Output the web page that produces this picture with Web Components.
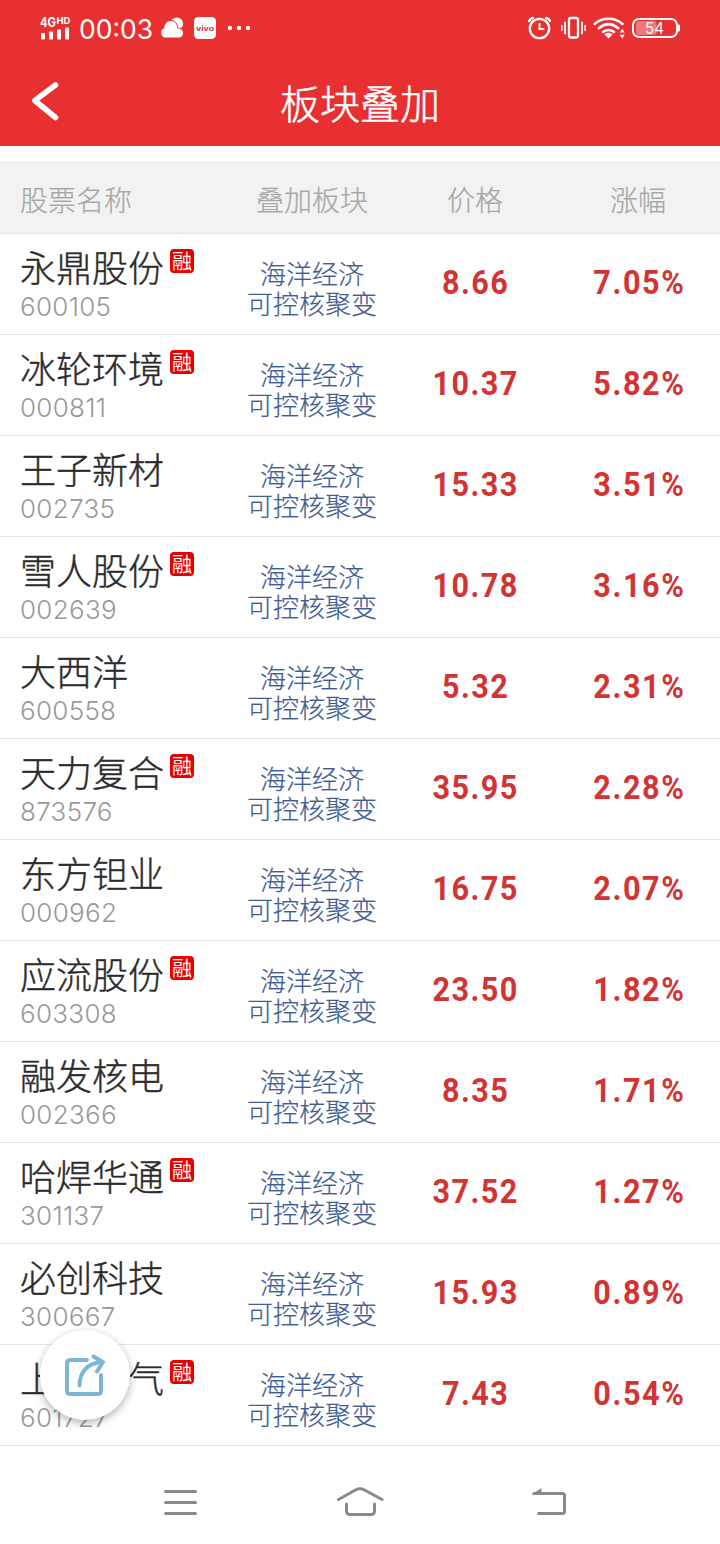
<!DOCTYPE html>
<html lang="zh-CN">
<head>
<meta charset="utf-8">
<title>板块叠加</title>
<style>
  html, body {
    margin: 0;
    background: #fff;
  }
  body {
    width: 720px;
    height: 1544px;
    overflow: hidden;
    font-family: Inter, "Noto Sans CJK SC", sans-serif;
  }
</style>
</head>
<body>
<overlay-app></overlay-app>

<script>
const CJK = '"Noto Sans CJK SC", sans-serif';

const STOCKS = [
  ["永鼎股份", "600105", "8.66", "7.05%", true],
  ["冰轮环境", "000811", "10.37", "5.82%", true],
  ["王子新材", "002735", "15.33", "3.51%", false],
  ["雪人股份", "002639", "10.78", "3.16%", true],
  ["大西洋", "600558", "5.32", "2.31%", false],
  ["天力复合", "873576", "35.95", "2.28%", true],
  ["东方钽业", "000962", "16.75", "2.07%", false],
  ["应流股份", "603308", "23.50", "1.82%", true],
  ["融发核电", "002366", "8.35", "1.71%", false],
  ["哈焊华通", "301137", "37.52", "1.27%", true],
  ["必创科技", "300667", "15.93", "0.89%", false],
  ["上海电气", "601727", "7.43", "0.54%", true],
];

class StatusBar extends HTMLElement {
  constructor() {
    super();
    this.attachShadow({ mode: "open" });
    this.shadowRoot.innerHTML = `
      <style>
        :host {
          display: flex;
          justify-content: space-between;
          height: 56px;
          box-sizing: border-box;
          padding: 0 40px;
          color: #fff;
        }
        .side { display: flex; align-items: center; }
        svg { display: block; flex: none; }
        .signal { padding-bottom: 3px; }
        .time {
          width: 82px;
          font: 400 26.5px/32px Inter, sans-serif;
          padding-top: 2px;
          white-space: nowrap;
        }
        .cloud { margin-right: 10px; }
        .vivo { margin-right: 11px; }
      </style>
      <div class="side">
        <svg class="signal" width="39" height="32" viewBox="0 -6 39 32" fill="#fff">
          <g font-family="Inter, sans-serif" font-weight="700">
            <text x="0" y="10" font-size="13" textLength="16" lengthAdjust="spacingAndGlyphs">4G</text>
            <text x="16.500" y="7" font-size="9.500" textLength="14" lengthAdjust="spacingAndGlyphs">HD</text>
          </g>
          <rect x="1" y="16" width="4" height="6.500" rx="1"/>
          <rect x="9" y="14.500" width="4" height="8" rx="1"/>
          <rect x="17" y="12.500" width="4" height="10" rx="1"/>
          <rect x="25" y="10.500" width="4" height="12" rx="1"/>
        </svg>
        <span class="time">00:03</span>
        <svg class="cloud" width="23" height="22" viewBox="0 0 23 22">
          <circle cx="15.800" cy="6.800" r="6.300" fill="#fff"/>
          <path d="M5 20.500C-1.500 20.500-1 11.600 3.300 11.600 3.300 1.500 16 1.500 16.500 11.500 24 11 23.500 20.500 17.500 20.500Z" fill="#fff" stroke="#e83030" stroke-width="2" paint-order="stroke"/>
        </svg>
        <svg class="vivo" width="22" height="22" viewBox="0 0 22 22">
          <rect width="22" height="22" rx="4.500" fill="#fff"/>
          <text x="2" y="13.500" textLength="18" lengthAdjust="spacingAndGlyphs" font-family="Inter, sans-serif" font-size="7" font-weight="700" fill="#d0343c">vivo</text>
        </svg>
        <svg width="24" height="6" viewBox="0 0 24 6" fill="#fff">
          <circle cx="3" cy="3" r="2.200"/><circle cx="12" cy="3" r="2.200"/><circle cx="21" cy="3" r="2.200"/>
        </svg>
      </div>
      <div class="side">
        <svg width="153" height="24" viewBox="0 0 153 24" fill="none" stroke="#fff" stroke-width="2.300" stroke-linecap="round">
          <circle cx="12.500" cy="12.500" r="9.700"/>
          <path d="M12.500 8v5h4" stroke-width="2"/>
          <path d="M2 5Q3 2.500 6 2M23 5Q22 2.500 19 2"/>
          <rect x="42" y="2" width="9" height="19.500" rx="2"/>
          <path d="M38 6.500v11M55 6.500v11" stroke-width="1.800"/>
          <path d="M34.800 9.500v5M58.200 9.500v5" stroke-width="1.600"/>
          <path d="M67.500 8C75 1 88 1 95.500 8M71.800 12.200C78 7 85 7 91.200 12.200M76 16C80 13 83 13 87 16" stroke-width="2.500"/>
          <path d="M77.500 18.500c2.500-2.500 5.500-2.500 8 0l-4 4Z" fill="#fff" stroke="none"/>
          <path d="M95.200 12.700l2.500 3.800h-5zM95.200 22.500l2.500-3.800h-5z" fill="#fff" stroke="none"/>
          <rect x="109" y="5" width="20.500" height="14" rx="3" fill="#fff" fill-opacity=".35" stroke="none"/>
          <rect x="106" y="3" width="44" height="18" rx="6" stroke-width="2"/>
          <path d="M152 9.500v5" stroke-width="2"/>
          <text x="118" y="18" fill="#fff" stroke="none" font-family="Inter, sans-serif" font-size="16.500" textLength="19" lengthAdjust="spacingAndGlyphs">54</text>
        </svg>
      </div>
    `;
  }
}

class TitleBar extends HTMLElement {
  constructor() {
    super();
    this.attachShadow({ mode: "open" });
    this.shadowRoot.innerHTML = `
      <style>
        :host {
          display: grid;
          grid-template-columns: 90px 1fr 90px;
          align-items: center;
          height: 90px;
          color: #fff;
        }
        svg { display: block; margin-left: 30px; }
        h1 {
          margin: 0;
          padding-top: 2px;
          text-align: center;
          font: 300 40px/60px ${CJK};
          -webkit-text-stroke: 0.5px;
        }
      </style>
      <svg width="30" height="40" viewBox="0 0 30 40" fill="none" stroke="#fff" stroke-width="5.500" stroke-linecap="round" stroke-linejoin="round">
        <path d="M25.500 4 4.800 19.500 25.500 36.500"/>
      </svg>
      <h1><slot></slot></h1>
    `;
  }
}

class StockHead extends HTMLElement {
  constructor() {
    super();
    this.attachShadow({ mode: "open" });
    this.shadowRoot.innerHTML = `
      <style>
        :host {
          display: grid;
          grid-template-columns: 230px 164px 162px 164px;
          align-items: center;
          height: 72px;
          box-sizing: border-box;
          margin-top: 16px;
          background: #f2f2f2;
          border-top: 1px solid #e6e6e6;
          border-bottom: 1px solid #e6e6e6;
          color: #a6a6a6;
          font: 300 28px/40px ${CJK};
          -webkit-text-stroke: 0.2px;
          text-align: center;
        }
        span { padding-top: 2px; }
        .first { text-align: left; padding-left: 20px; }
      </style>
      <span class="first">股票名称</span><span>叠加板块</span><span>价格</span><span>涨幅</span>
    `;
  }
}

class MarginBadge extends HTMLElement {
  constructor() {
    super();
    this.attachShadow({ mode: "open" });
    this.shadowRoot.innerHTML = `
      <style>
        :host {
          display: block;
          width: 24px;
          height: 24px;
          border-radius: 4px;
          background: #e60000;
          color: #fff;
          font: 400 20px/23px ${CJK};
          text-align: center;
        }
      </style>
      <slot></slot>
    `;
  }
}

class StockRow extends HTMLElement {
  constructor() {
    super();
    this.attachShadow({ mode: "open" });
  }

  connectedCallback() {
    const badge = this.hasAttribute("margin") ? "<margin-badge>融</margin-badge>" : "";
    this.shadowRoot.innerHTML = `
      <style>
        :host {
          display: grid;
          grid-template-columns: 230px 164px 162px 164px;
          height: 101px;
          box-sizing: border-box;
          border-bottom: 1px solid #e6e6e6;
          text-align: center;
        }
        .stock { padding: 8px 0 0 20px; text-align: left; }
        .name {
          display: flex;
          gap: 6px;
          height: 50px;
          color: #2b2b2b;
          font: 300 36px/48px ${CJK};
          -webkit-text-stroke: 0.4px;
        }
        margin-badge { margin-top: 7px; -webkit-text-stroke: 0; }
        .code {
          color: #999;
          font: 300 26px/30px Inter, sans-serif;
          letter-spacing: 0.3px;
        }
        .boards {
          padding-top: 26px;
          color: #3f5c93;
          font: 300 26px/30px "Liberation Sans", ${CJK};
          -webkit-text-stroke: 0.2px;
        }
        /* narrow, loosely spaced figures */
        .num {
          align-self: center;
          color: #d23434;
          font: 700 34px/40px Roboto, sans-serif;
          letter-spacing: 1.6px;
          transform: scaleX(0.9);
          padding: 0 0 5px 1.6px;
        }
        .change { letter-spacing: 1.8px; padding-left: 3px; }
      </style>
      <div class="stock">
        <div class="name">${this.getAttribute("name")}${badge}</div>
        <div class="code">${this.getAttribute("code")}</div>
      </div>
      <div class="boards">海洋经济<br>可控核聚变</div>
      <div class="num">${this.getAttribute("price")}</div>
      <div class="num change">${this.getAttribute("change")}</div>
    `;
  }
}

class ShareButton extends HTMLElement {
  constructor() {
    super();
    this.attachShadow({ mode: "open" });
    this.shadowRoot.innerHTML = `
      <style>
        :host {
          display: grid;
          place-items: center;
          width: 90px;
          height: 90px;
          border-radius: 50%;
          background: #fff;
          box-shadow: 0 3px 8px rgba(0, 0, 0, 0.3);
        }
      </style>
      <svg width="44" height="44" viewBox="0 0 44 44" fill="none" stroke="#7db6d5" stroke-width="4" stroke-linecap="round" stroke-linejoin="round">
        <path d="M24 7H7.500Q4 7 4 10.500V37.500Q4 41 7.500 41H34.500Q38 41 38 37.500V22"/>
        <path d="M16.500 32.500C16.500 18.500 25 10 39 9M30.500 3.500 40 9 34 18.500"/>
      </svg>
    `;
  }
}

class SystemNav extends HTMLElement {
  constructor() {
    super();
    this.attachShadow({ mode: "open" });
    this.shadowRoot.innerHTML = `
      <style>
        :host {
          display: flex;
          height: 98px;
          box-sizing: border-box;
          padding: 40px 0 0 163px;
        }
        svg { fill: none; stroke: #8a8a8a; stroke-width: 3; stroke-linecap: round; stroke-linejoin: round; }
        .home { margin: 0 147px 0 138px; }
      </style>
      <svg width="35" height="34" viewBox="0 0 35 34"><path d="M2.500 5.500h30M2.500 16.500h30M2.500 27.500h30"/></svg>
      <svg class="home" width="48" height="34" viewBox="0 0 48 34"><path d="M2.500 13.500 19.500 4Q24 1.500 28.500 4L46 13.500M10.500 18v7q0 3.500 3.500 3.500h21q3.500 0 3.500-3.500V18"/></svg>
      <svg width="36" height="34" viewBox="0 0 36 34"><path d="M3 7.500H31.500Q33.500 7.500 33.500 9.500V25.500Q33.500 27.500 31.500 27.500H7.500"/><path d="M.5 8.500 10.500 2v6.500Z" fill="#8a8a8a" stroke="none"/></svg>
    `;
  }
}

class OverlayApp extends HTMLElement {
  constructor() {
    super();
    this.attachShadow({ mode: "open" });
    const rows = STOCKS.map(([name, code, price, change, margin]) =>
      `<stock-row name="${name}" code="${code}" price="${price}" change="${change}"${margin ? " margin" : ""}></stock-row>`
    ).join("");
    this.shadowRoot.innerHTML = `
      <style>
        :host {
          display: block;
          position: relative;
          width: 720px;
          height: 1544px;
          overflow: hidden;
        }
        header { background: #e83030; }
        /* floats over the list */
        share-button { position: absolute; left: 40px; top: 1330px; z-index: 1; }
      </style>
      <header>
        <status-bar></status-bar>
        <title-bar>板块叠加</title-bar>
      </header>
      <stock-head></stock-head>
      <main>${rows}</main>
      <system-nav></system-nav>
      <share-button></share-button>
    `;
  }
}

customElements.define("status-bar", StatusBar);
customElements.define("title-bar", TitleBar);
customElements.define("stock-head", StockHead);
customElements.define("margin-badge", MarginBadge);
customElements.define("stock-row", StockRow);
customElements.define("share-button", ShareButton);
customElements.define("system-nav", SystemNav);
customElements.define("overlay-app", OverlayApp);
</script>
</body>
</html>
